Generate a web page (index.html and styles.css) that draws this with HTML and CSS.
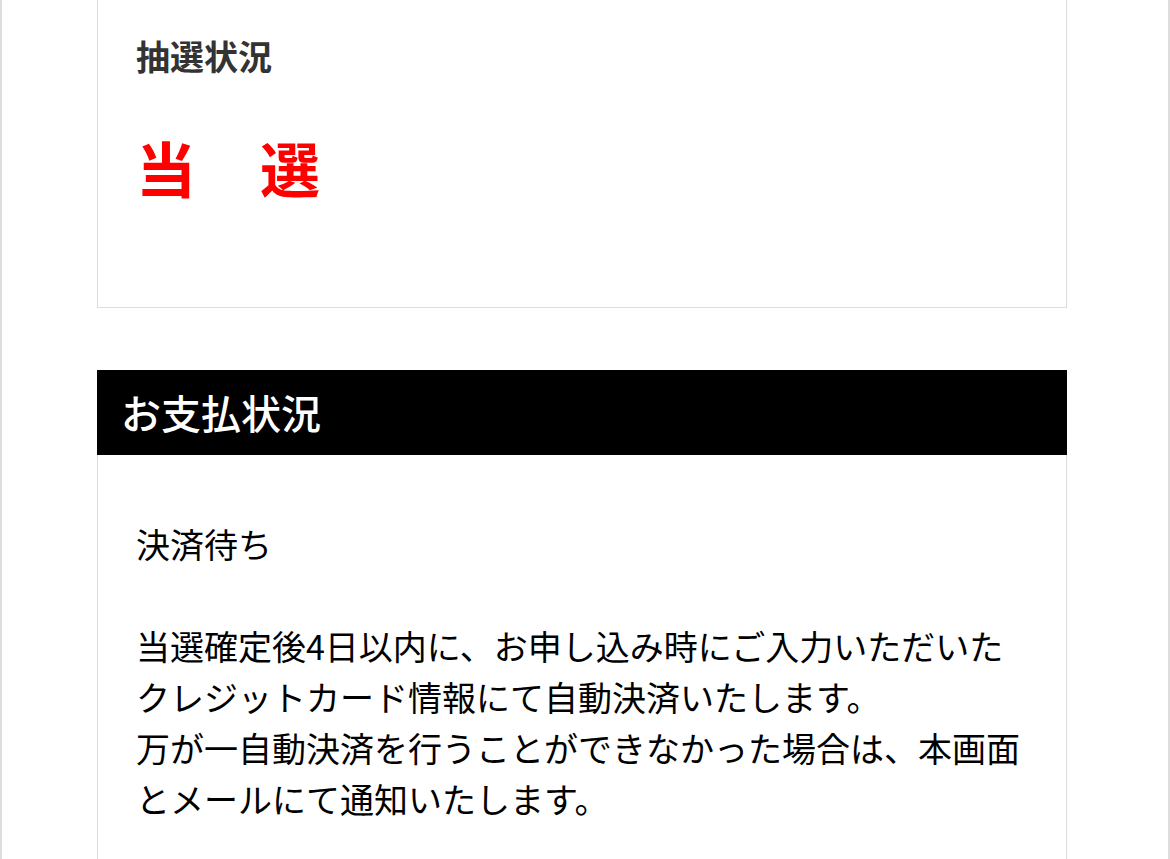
FILE: index.html
```html
<!DOCTYPE html>
<html lang="ja">
<head>
    <meta charset="UTF-8">
    <meta name="viewport" content="width=device-width, initial-scale=1.0">
    <title>お申し込み状況</title>
    <link rel="stylesheet" href="styles.css">
</head>
<body>
    <div class="page">
        <!-- lottery result -->
        <div class="card card-top">
            <div class="card-body lottery">
                <div class="label">抽選状況</div>
                <div class="result">当　選</div>
            </div>
        </div>

        <!-- payment status -->
        <div class="card">
            <div class="card-head">お支払状況</div>
            <div class="card-body payment">
                <p>決済待ち<br><br>当選確定後4日以内に、お申し込み時にご入力いただいたクレジットカード情報にて自動決済いたします。<br>万が一自動決済を行うことができなかった場合は、本画面とメールにて通知いたします。</p>
            </div>
        </div>
    </div>
</body>
</html>
```

FILE: styles.css
```css
/* page styles */
body {
    margin: 0;
    padding: 0;
    background-color: #fff;
    font-family: "Noto Sans CJK JP", "Noto Sans", sans-serif;
    color: #111;
}
.page {
    border-left: 2px solid #ddd;
    border-right: 2px solid #ddd;
    min-height: 100vh;
    box-sizing: border-box;
    padding: 0 0 40px 95px;
}
.card {
    width: 970px;
    box-sizing: border-box;
    border: 1px solid #ddd;
    margin-bottom: 62px;
}
.card-top {
    border-top: none;
}
.card-head {
    background-color: #000;
    color: #fff;
    font-size: 40px;
    font-weight: 500;
    line-height: 85px;
    height: 85px;
    padding: 0 24px;
    margin: -1px -1px 0 -1px;
}
.card-body {
    padding: 0 38px;
}
.lottery {
    padding-top: 30px;
    padding-bottom: 95px;
}
.label {
    font-size: 34px;
    font-weight: bold;
    line-height: 51px;
    color: #333;
}
.result {
    margin-top: 41px;
    font-size: 60px;
    font-weight: bold;
    line-height: 90px;
    color: #f00;
    letter-spacing: 2px;
}
.payment {
    padding-top: 63px;
    padding-bottom: 60px;
}
.payment p {
    margin: 0;
    font-size: 34px;
    line-height: 51px;
    color: #000;
}
```
